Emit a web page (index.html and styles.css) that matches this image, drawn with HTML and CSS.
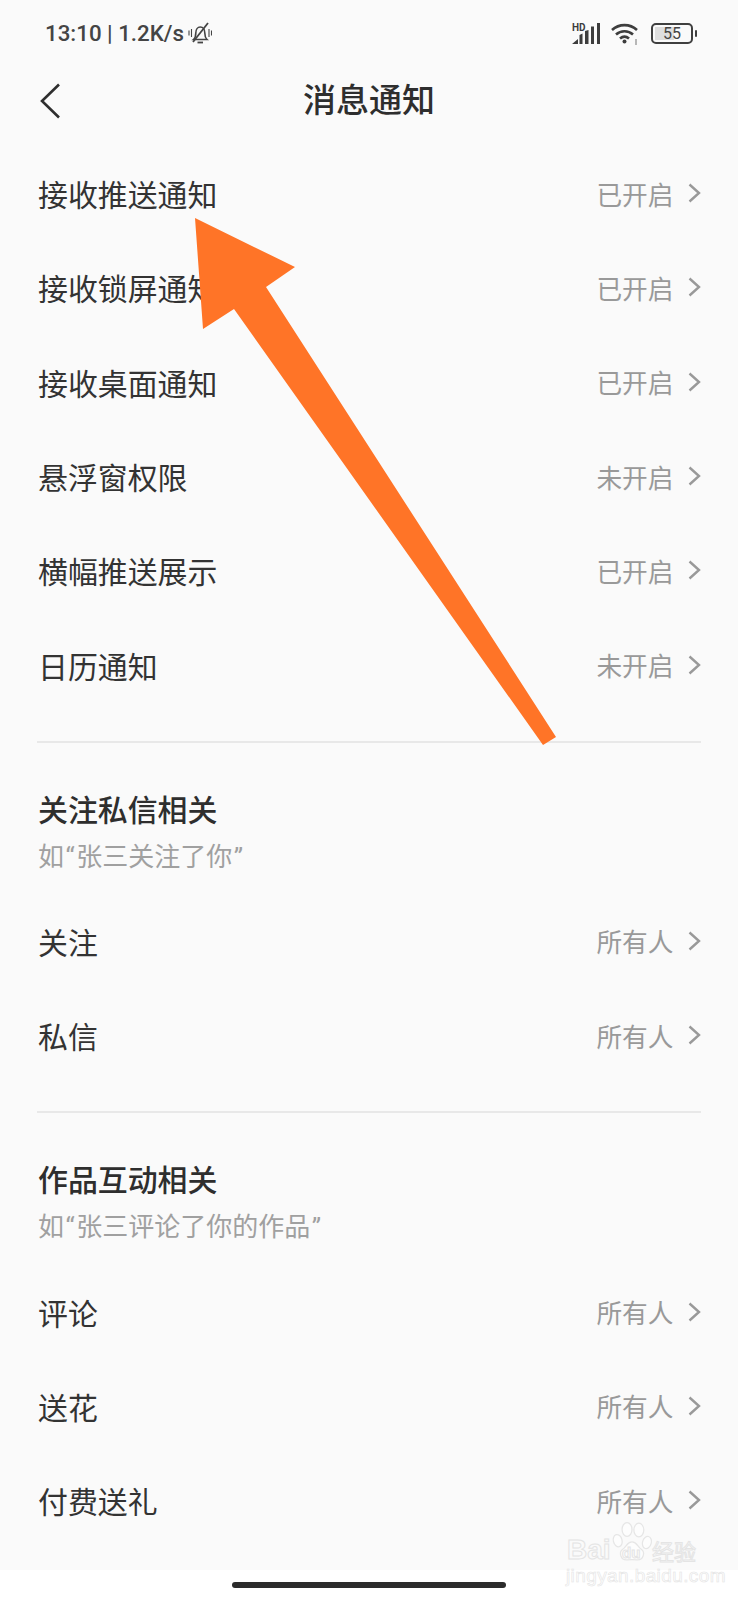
FILE: index.html
```html
<!DOCTYPE html>
<html lang="zh-CN">
<head>
<meta charset="utf-8">
<title>消息通知</title>
<link rel="stylesheet" href="styles.css">
</head>
<body>
<div class="screen">
  <div class="status">
    <div class="status-left">
      <span>13:10 | 1.2K/s</span>
      <svg class="bell" width="24" height="24" viewBox="0 0 24 24" fill="none" stroke="#444" stroke-width="1.600">
        <path d="M5.500 18.500c1.800-1.500 2.300-3 2.300-6.500 0-3.400 1.800-6 4.500-6s4.500 2.600 4.500 6c0 3.500.6 5 2.200 6.500z"/>
        <path d="M9.500 21.500h5.500" stroke-width="1.800"/>
        <path d="M5 21 20 2" stroke-width="1.800"/>
        <path d="M1 9.500v5M3.500 8v8M21 8v8M23.500 9.500v5" stroke-width="1.100"/>
      </svg>
    </div>
    <div class="status-right">
      <svg width="28" height="21" viewBox="0 0 28 21" fill="#3d3d3d">
        <text x="0" y="8" class="hd">HD</text>
        <path d="M0 21l6-5v5zM7.500 21v-9l3-1.500V21zM13 21V8l3.500-1v14zM19 21V3.500h3V21zM25 21V0h3v21z"/>
      </svg>
      <svg width="29" height="23" viewBox="0 0 29 23" fill="none" stroke="#3d3d3d" stroke-width="2.600">
        <path d="M1 8c7-6.500 18-6.500 25 0"/>
        <path d="M5 12.500c4.800-4.300 12.200-4.300 17 0"/>
        <path d="M9 16.500c2.700-2.300 6.300-2.300 9 0"/>
        <circle cx="13.500" cy="19.500" r="2" fill="#3d3d3d" stroke="none"/>
        <path d="M25 17v6" stroke="#8a8a8a" stroke-width="1.200"/>
      </svg>
      <div class="battery">
        <div class="battery-body"><span class="battery-level"></span><span class="battery-num">55</span></div>
        <span class="battery-tip"></span>
      </div>
    </div>
  </div>

  <header class="nav">
    <svg class="back" width="22" height="36" viewBox="0 0 22 36" fill="none" stroke="#2e2e2e" stroke-width="2.600">
      <path d="M20 1.500 3 18l17 16.500"/>
    </svg>
    <h1>消息通知</h1>
  </header>

  <section class="group first">
    <div class="row"><span class="label">接收推送通知</span><span class="value">已开启</span><svg class="chev" viewBox="0 0 13 20"><path d="M1.500 1.500 11 10l-9.500 8.500"/></svg></div>
    <div class="row"><span class="label">接收锁屏通知</span><span class="value">已开启</span><svg class="chev" viewBox="0 0 13 20"><path d="M1.500 1.500 11 10l-9.500 8.500"/></svg></div>
    <div class="row"><span class="label">接收桌面通知</span><span class="value">已开启</span><svg class="chev" viewBox="0 0 13 20"><path d="M1.500 1.500 11 10l-9.500 8.500"/></svg></div>
    <div class="row"><span class="label">悬浮窗权限</span><span class="value">未开启</span><svg class="chev" viewBox="0 0 13 20"><path d="M1.500 1.500 11 10l-9.500 8.500"/></svg></div>
    <div class="row"><span class="label">横幅推送展示</span><span class="value">已开启</span><svg class="chev" viewBox="0 0 13 20"><path d="M1.500 1.500 11 10l-9.500 8.500"/></svg></div>
    <div class="row"><span class="label">日历通知</span><span class="value">未开启</span><svg class="chev" viewBox="0 0 13 20"><path d="M1.500 1.500 11 10l-9.500 8.500"/></svg></div>
  </section>

  <section class="group titled">
    <h2>关注私信相关</h2>
    <p>如<span class="q">“</span>张三关注了你<span class="q">”</span></p>
    <div class="row"><span class="label">关注</span><span class="value">所有人</span><svg class="chev" viewBox="0 0 13 20"><path d="M1.500 1.500 11 10l-9.500 8.500"/></svg></div>
    <div class="row"><span class="label">私信</span><span class="value">所有人</span><svg class="chev" viewBox="0 0 13 20"><path d="M1.500 1.500 11 10l-9.500 8.500"/></svg></div>
  </section>

  <section class="group titled last">
    <h2>作品互动相关</h2>
    <p>如<span class="q">“</span>张三评论了你的作品<span class="q">”</span></p>
    <div class="row"><span class="label">评论</span><span class="value">所有人</span><svg class="chev" viewBox="0 0 13 20"><path d="M1.500 1.500 11 10l-9.500 8.500"/></svg></div>
    <div class="row"><span class="label">送花</span><span class="value">所有人</span><svg class="chev" viewBox="0 0 13 20"><path d="M1.500 1.500 11 10l-9.500 8.500"/></svg></div>
    <div class="row"><span class="label">付费送礼</span><span class="value">所有人</span><svg class="chev" viewBox="0 0 13 20"><path d="M1.500 1.500 11 10l-9.500 8.500"/></svg></div>
  </section>

  <footer class="home"><span class="home-bar"></span></footer>

  <svg class="arrow" width="738" height="800" viewBox="0 0 738 800">
    <polygon points="195,218 295,267 266,287 556,737 543,745 234,309 203,329" fill="#ff7427"/>
  </svg>

  <div class="watermark">
    <svg class="paw" viewBox="0 0 64 66" fill="#fdfdfd" stroke="#e6e6e6" stroke-width="2">
      <ellipse cx="9" cy="30" rx="7" ry="10" transform="rotate(-15 9 30)"/>
      <ellipse cx="24" cy="12" rx="8" ry="11"/>
      <ellipse cx="43" cy="13" rx="8" ry="11"/>
      <ellipse cx="56" cy="33" rx="7" ry="10" transform="rotate(15 56 33)"/>
      <path d="M32 32c-8 0-9 8-15 12-7 5-3 18 7 17 5-.5 11-.5 16 0 10 1 14-12 7-17-6-4-7-12-15-12z"/>
    </svg>
    <span class="wm-bai">Bai</span>
    <span class="wm-du">du</span>
    <span class="wm-cn">经验</span>
    <span class="wm-url">jingyan.baidu.com</span>
  </div>
</div>
</body>
</html>
```
FILE: styles.css
```css
* { box-sizing: border-box; }
html, body { margin: 0; padding: 0; }
body { background: #fff; font-family: "Noto Sans CJK SC", "Noto Sans", sans-serif; }

.screen {
  position: relative;
  width: 738px;
  height: 1600px;
  overflow: hidden;
  background: #fff;
  color: #2e2e2e;
  display: flex;
  flex-direction: column;
}

.status {
  height: 66px;
  padding: 0 41px 0 45px;
  background: #fafafa;
  display: flex;
  align-items: center;
  justify-content: space-between;
}
.status-left {
  display: flex;
  align-items: center;
  gap: 4px;
  font-family: Roboto, sans-serif;
  font-weight: 500;
  font-size: 22.300px;
  color: #444;
}
.bell { display: block; }
.status-right { display: flex; align-items: center; gap: 11px; }
.hd { font-family: Roboto, sans-serif; font-size: 10px; font-weight: 700; fill: #3d3d3d; }
.battery { display: flex; align-items: center; gap: 2px; }
.battery-body {
  position: relative;
  width: 42px;
  height: 21px;
  border: 2px solid #3f3f3f;
  border-radius: 5px;
  display: flex;
  align-items: center;
  justify-content: center;
  font-family: Roboto, sans-serif;
  font-size: 16px;
  color: #444;
  overflow: hidden;
}
.battery-level { position: absolute; left: 2px; top: 2px; bottom: 2px; width: 19px; background: #dedede; }
.battery-num { position: relative; }
.battery-tip { width: 2px; height: 7px; background: #3f3f3f; border-radius: 1px; }

.nav {
  height: 64px;
  background: #fafafa;
  position: relative;
  display: flex;
  align-items: center;
  justify-content: center;
}
.back { position: absolute; left: 39px; top: 17px; }
h1 { margin: 0; font-size: 33px; font-weight: 500; line-height: 64px; color: #2e2e2e; }

.group {
  background: #fafafa;
  padding: 0 37px;
}
.first { padding-top: 16px; padding-bottom: 29px; }
.titled { padding-top: 0; }
.row {
  height: 94.300px;
  display: flex;
  align-items: center;
}
.label { flex: 1; padding-left: 1px; font-size: 29.900px; line-height: 38px; color: #333; }
.value { font-size: 25.700px; color: #999; }
.chev {
  width: 13px;
  height: 20px;
  margin-left: 14.500px;
  fill: none;
  stroke: #999;
  stroke-width: 2.400;
}

.titled::before {
  content: "";
  display: block;
  height: 2px;
  background: #e8e8e8;
  margin-bottom: 45px;
}
h2 { margin: 0; padding-left: 1px; font-size: 29.900px; font-weight: 500; line-height: 40px; color: #2e2e2e; }
.titled p {
  margin: 11px 0 19px;
  padding-left: 1px;
  font-family: Roboto, "Noto Sans CJK SC", sans-serif;
  font-size: 26px;
  line-height: 36px;
  color: #a0a0a0;
}
.q { padding: 0 1.500px; }
.titled:not(.last) { padding-bottom: 29px; }
.last { flex: 1; }

.home {
  height: 30px;
  background: #fff;
  display: flex;
  justify-content: center;
  padding-top: 12px;
}
.home-bar { width: 274px; height: 6px; background: #2b2b2b; border-radius: 3px; }

.arrow { position: absolute; left: 0; top: 0; pointer-events: none; }

.watermark { position: absolute; left: 560px; top: 1515px; width: 140px; height: 75px; }
.paw { position: absolute; left: 52px; top: 7px; width: 40px; height: 41px; }
.wm-bai, .wm-du, .wm-cn, .wm-url { position: absolute; color: transparent; -webkit-text-stroke: 1px #e4e4e4; font-family: "Liberation Sans", sans-serif; }
.wm-bai { left: 7px; top: 22px; font-size: 28px; font-weight: 700; line-height: 26px; }
.wm-du { left: 62px; top: 30px; font-size: 15px; font-weight: 700; line-height: 16px; }
.wm-cn { left: 92px; top: 24px; font-size: 22px; line-height: 22px; font-family: "Noto Sans CJK SC", sans-serif; }
.wm-url { left: 6px; top: 51px; font-size: 19px; line-height: 20px; -webkit-text-stroke: .6px #e4e4e4; letter-spacing: .4px; }
```
